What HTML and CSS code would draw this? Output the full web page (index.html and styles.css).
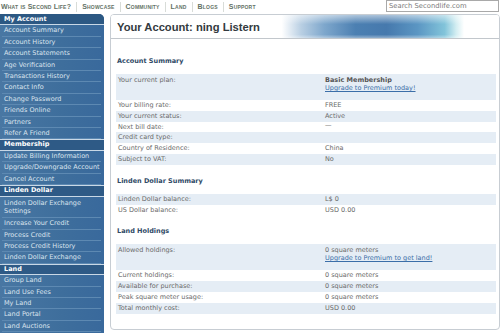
FILE: index.html
```html
<!DOCTYPE html>
<html>
<head>
<meta charset="utf-8">
<link rel="stylesheet" href="styles.css">
</head>
<body>
<div class="topbar">
  <nav class="nav">
    <a>What is Second Life?</a><span class="sep"></span>
    <a>Showcase</a><span class="sep"></span>
    <a>Community</a><span class="sep"></span>
    <a>Land</a><span class="sep"></span>
    <a>Blogs</a><span class="sep"></span>
    <a>Support</a>
  </nav>
  <div class="search">Search Secondlife.com</div>
</div>
<div class="main">
  <aside class="sidebar">
    <div class="sb-head first">My Account</div>
    <div class="sb-item">Account Summary</div>
    <div class="sb-item">Account History</div>
    <div class="sb-item">Account Statements</div>
    <div class="sb-item">Age Verification</div>
    <div class="sb-item">Transactions History</div>
    <div class="sb-item">Contact Info</div>
    <div class="sb-item">Change Password</div>
    <div class="sb-item">Friends Online</div>
    <div class="sb-item">Partners</div>
    <div class="sb-item">Refer A Friend</div>
    <div class="sb-head">Membership</div>
    <div class="sb-item">Update Billing Information</div>
    <div class="sb-item">Upgrade/Downgrade Account</div>
    <div class="sb-item">Cancel Account</div>
    <div class="sb-head">Linden Dollar</div>
    <div class="sb-item two">Linden Dollar Exchange Settings</div>
    <div class="sb-item">Increase Your Credit</div>
    <div class="sb-item">Process Credit</div>
    <div class="sb-item">Process Credit History</div>
    <div class="sb-item">Linden Dollar Exchange</div>
    <div class="sb-head">Land</div>
    <div class="sb-item">Group Land</div>
    <div class="sb-item">Land Use Fees</div>
    <div class="sb-item">My Land</div>
    <div class="sb-item">Land Portal</div>
    <div class="sb-item">Land Auctions</div>
  </aside>
  <section class="panel">
    <header class="panel-head"><h1>Your Account: ning Listern</h1></header>
    <div class="panel-body">
      <h2>Account Summary</h2>
      <div class="table">
        <div class="row tall"><span>Your current plan:</span><span><b>Basic Membership</b><br><a class="link">Upgrade to Premium today!</a></span></div>
        <div class="row"><span>Your billing rate:</span><span>FREE</span></div>
        <div class="row"><span>Your current status:</span><span>Active</span></div>
        <div class="row"><span>Next bill date:</span><span class="dash">—</span></div>
        <div class="row"><span>Credit card type:</span><span></span></div>
        <div class="row"><span>Country of Residence:</span><span>China</span></div>
        <div class="row"><span>Subject to VAT:</span><span>No</span></div>
      </div>
      <h2>Linden Dollar Summary</h2>
      <div class="table">
        <div class="row"><span>Linden Dollar balance:</span><span>L$ 0</span></div>
        <div class="row"><span>US Dollar balance:</span><span>USD 0.00</span></div>
      </div>
      <h2>Land Holdings</h2>
      <div class="table">
        <div class="row tall"><span>Allowed holdings:</span><span>0 square meters<br><a class="link">Upgrade to Premium to get land!</a></span></div>
        <div class="row"><span>Current holdings:</span><span>0 square meters</span></div>
        <div class="row"><span>Available for purchase:</span><span>0 square meters</span></div>
        <div class="row"><span>Peak square meter usage:</span><span>0 square meters</span></div>
        <div class="row"><span>Total monthly cost:</span><span>USD 0.00</span></div>
      </div>
    </div>
  </section>
</div>
</body>
</html>
```
FILE: styles.css
```css
* { box-sizing: border-box; }
html, body { margin: 0; padding: 0; background: #fff; }
body { width: 500px; height: 333px; overflow: hidden; font-family: "DejaVu Sans", Verdana, sans-serif; }

.topbar { height: 14px; display: flex; align-items: flex-start; justify-content: space-between; }
.nav { display: flex; align-items: center; height: 13px; padding-left: 1px; }
.nav a { font-family: "Liberation Sans", Arial, sans-serif; font-weight: bold; font-variant: small-caps; font-size: 7px; letter-spacing: 0.2px; color: #637266; line-height: 13px; }
.sep { width: 1px; height: 10px; background: #d8dcd8; margin: 0 5px; }
.search { width: 113px; height: 12px; border: 1px solid #a9a9a9; font-size: 6.8px; color: #7a7a7a; line-height: 10px; padding-left: 2px; margin-right: 1px; }

.main { display: flex; gap: 6px; height: 319px; }
.sidebar { width: 104px; flex: none; background: linear-gradient(to right, #4977a3, #3e6e9c 60%, #39699c); border-top-right-radius: 5px; color: #dbe4ee; font-size: 6.5px; overflow: hidden; }
.sb-head { font-weight: bold; color: #fff; background: #2e5a86; line-height: 9.4px; padding: 0 4px; border-top: 1px solid #c9d8e6; border-bottom: 1px solid #c9d8e6; }
.sb-head.first { border-top: none; line-height: 10.4px; background: #2c5883; }
.sb-item { line-height: 10.4px; padding: 0 2px; margin: 0 3px 0 2px; border-bottom: 1px solid #5d89b2; white-space: nowrap; }
.sb-item.two { white-space: normal; line-height: 8.3px; padding-top: 2px; padding-bottom: 2px; }

.panel { flex: 1; border: 1px solid #c7cdd3; border-radius: 4px; height: 316px; overflow: hidden; }
.panel-head { height: 24px; border-bottom: 1px solid #c2c7cc; display: flex; align-items: center; padding-left: 6px;
  background:
    linear-gradient(to bottom, rgba(255,255,255,0.55), rgba(255,255,255,0) 40%, rgba(255,255,255,0) 85%, rgba(255,255,255,0.4)),
    linear-gradient(to right, #fff 0%, #fff 44%, #b9cfe3 49%, #7ea7cc 55%, #4c80b2 63%, #4679ad 71%, #5b96c3 79%, #82c4da 86%, #d4eef2 89%, #fff 91%, #fff 100%); }
.panel-head h1 { margin: 0; font-family: "Liberation Sans", Arial, sans-serif; font-weight: bold; font-size: 11.2px; color: #333a40; }

.panel-body { padding: 6px 3px 0 5px; font-size: 6.5px; color: #6a6a6a; }
h2 { margin: 12px 0 9px 1px; font-size: 6.5px; line-height: 8px; font-weight: bold; color: #2f4a66; }
.table { display: flex; flex-direction: column; }
.row { display: grid; grid-template-columns: 209px 1fr; line-height: 10.8px; }
.row > span:first-child { padding-left: 2px; }
.row:nth-child(odd) { background: #e5edf5; }
.row.tall { line-height: 8px; padding: 2px 0 8px; }
.row b { color: #555; }
.link { color: #3b6ea8; text-decoration: underline; }
.dash { line-height: 7px; }
```
